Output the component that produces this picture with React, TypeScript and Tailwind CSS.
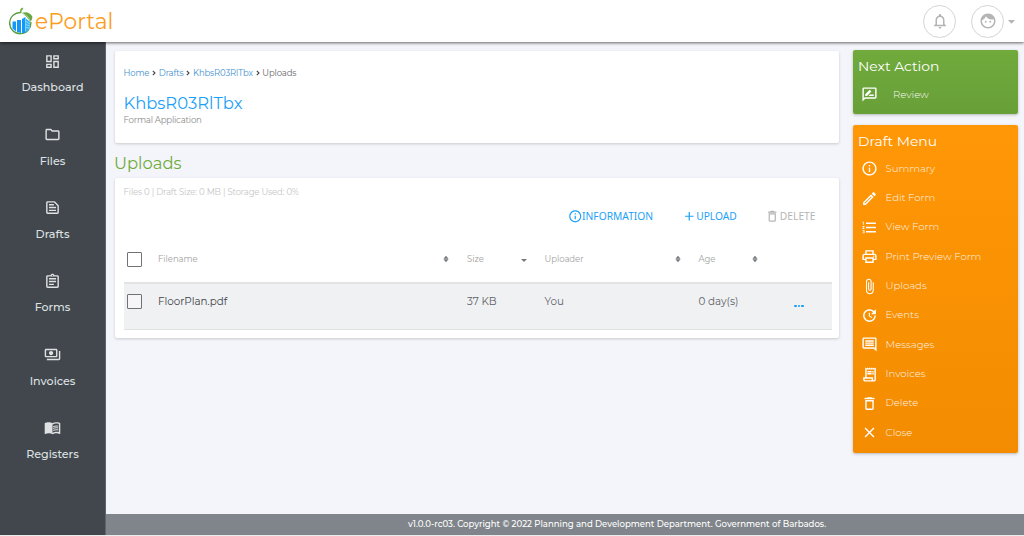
import type { ReactNode } from "react"
import type { IconType } from "react-icons"
import {
    MdAdd,
    MdArrowDropDown,
    MdAttachFile,
    MdClose,
    MdDeleteOutline,
    MdFace,
    MdFormatListNumbered,
    MdInfoOutline,
    MdMenuBook,
    MdNotificationsNone,
    MdOutlineAssignment,
    MdOutlineComment,
    MdOutlineDashboard,
    MdOutlineFolder,
    MdOutlineModeEdit,
    MdOutlinePayments,
    MdOutlinePrint,
    MdOutlineRateReview,
    MdOutlineReceiptLong,
    MdOutlineTextSnippet,
    MdUpdate,
} from "react-icons/md"

const navItems: { label: string; icon: IconType }[] = [
    { label: "Dashboard", icon: MdOutlineDashboard },
    { label: "Files", icon: MdOutlineFolder },
    { label: "Drafts", icon: MdOutlineTextSnippet },
    { label: "Forms", icon: MdOutlineAssignment },
    { label: "Invoices", icon: MdOutlinePayments },
    { label: "Registers", icon: MdMenuBook },
]

const draftMenu: { label: string; icon: IconType }[] = [
    { label: "Summary", icon: MdInfoOutline },
    { label: "Edit Form", icon: MdOutlineModeEdit },
    { label: "View Form", icon: MdFormatListNumbered },
    { label: "Print Preview Form", icon: MdOutlinePrint },
    { label: "Uploads", icon: MdAttachFile },
    { label: "Events", icon: MdUpdate },
    { label: "Messages", icon: MdOutlineComment },
    { label: "Invoices", icon: MdOutlineReceiptLong },
    { label: "Delete", icon: MdDeleteOutline },
    { label: "Close", icon: MdClose },
]

function Logo() {
    return (
        <svg viewBox="0 0 24 28" className="h-7 w-6 shrink-0">
            <path d="M12 5.5A10.6 10.6 0 1 0 21.8 15" fill="none" stroke="#5b9f43" strokeWidth="1.4" />
            <path d="M11.3 6C10.5 3.5 11.5 1.5 13.5.6L14.4 2C12.7 2.7 12.2 4 12.7 6Z" fill="#6fae45" />
            <path d="M13 6C17 4 21.5 5.8 23.3 9.5C23.6 12 22.5 14 20.8 15C19.5 11 16.5 8.5 13 6Z" fill="#67a843" />
            <path d="M14 6.5C17.5 8 20 10.5 21 14" fill="none" stroke="#d8edcb" strokeWidth=".6" />
            <path d="M3.5 14.5H7V24.5L3.5 21.5ZM8 13H12V26L8 25ZM13 12L16.5 10V25.7L13 26.2Z" fill="#1199fa" />
            <path d="M17 11.5L21 15V21.5L17 25.3Z" fill="#38b2f5" />
            <path d="M17 14.5L21 17M17 17.5L21 19.2M17 20.5L21 21.3" stroke="#c8ecff" strokeWidth=".6" />
        </svg>
    )
}

function Header() {
    return (
        <header className="relative z-10 flex h-[42px] shrink-0 items-center bg-white pl-[8.5px] pr-[6px] shadow-[0_1px_3px_rgba(0,0,0,0.6)]">
            <Logo />
            <span className="ml-[2.5px] pt-px text-[21.8px] leading-none text-[#fb9d21]">ePortal</span>
            <div className="ml-auto flex items-center">
                <div className="flex size-[33px] items-center justify-center rounded-full border border-[#d4d4d4]">
                    <MdNotificationsNone className="size-[18px] text-[#b4b4b4]" />
                </div>
                <div className="ml-[15px] flex size-[33px] items-center justify-center rounded-full border border-[#d4d4d4]">
                    <MdFace className="size-[18px] text-[#b4b4b4]" />
                </div>
                <MdArrowDropDown className="-ml-px -mr-[2px] size-[17px] text-[#b4b4b4]" />
            </div>
        </header>
    )
}

function Sidebar() {
    return (
        <aside className="w-[106px] shrink-0 border-r border-[#5f656b] bg-[#41474d] pt-[10.5px] text-[#dfe1e2]">
            {navItems.map(({ label, icon: Icon }) => (
                <a key={label} className="flex h-[73.35px] flex-col items-center">
                    <Icon className="size-[17px]" />
                    <span className="mt-[8.7px] text-[11.1px] font-medium leading-[18px]">{label}</span>
                </a>
            ))}
        </aside>
    )
}

function Card({ className, children }: { className: string; children: ReactNode }) {
    return (
        <div className={`rounded-[2px] bg-white px-[8.5px] shadow-[0_1px_3px_rgba(0,0,0,0.18)] ${className}`}>{children}</div>
    )
}

function Sort({ down = false }: { down?: boolean }) {
    return (
        <svg viewBox="0 0 6 8" className="h-[8px] w-[6px] text-[#75797d]" fill="currentColor">
            {down ? <path d="M0 4h6L3 7z" /> : <path d="M.4 3.7 3 .8l2.6 2.9zM.4 4.3h5.2L3 7.2z" />}
        </svg>
    )
}

function Checkbox() {
    return <div className="ml-[3.5px] size-[15px] rounded-[1px] border-[1.5px] border-[#707276] bg-white/40" />
}

function Crumb() {
    return (
        <svg viewBox="0 0 4 6" className="mx-[2.75px] h-[6px] w-[4px]" fill="none" stroke="#444" strokeWidth="1.1">
            <path d="M.8.8 3 3 .8 5.2" />
        </svg>
    )
}

function Breadcrumbs() {
    return (
        <nav className="flex items-center text-[8.5px] leading-[12px] tracking-[-0.15px] text-[#4590d0]">
            <a>Home</a>
            <Crumb />
            <a>Drafts</a>
            <Crumb />
            <a>KhbsR03RlTbx</a>
            <Crumb />
            <span className="text-[#66696c]">Uploads</span>
        </nav>
    )
}

function FilesTable() {
    const cols = "grid grid-cols-[34.5px_309px_77.5px_154px_95.5px_1fr]"
    return (
        <div className="mt-[14px] -mr-px">
            <div className={`${cols} h-[45.5px] items-center border-b-2 border-[#e2e4e4] text-[8.5px] tracking-[-0.05px] text-[#a2a2a2]`}>
                <Checkbox />
                <div className="flex items-center justify-between pb-px pr-[18.5px]">
                    <span>Filename</span>
                    <Sort />
                </div>
                <div className="flex items-center justify-between pb-px pr-[18px]">
                    <span>Size</span>
                    <Sort down />
                </div>
                <div className="flex items-center justify-between pb-px pr-[17.5px]">
                    <span>Uploader</span>
                    <Sort />
                </div>
                <div className="flex items-center justify-between pb-px pr-[36px]">
                    <span>Age</span>
                    <Sort />
                </div>
            </div>
            <div className={`${cols} h-[46.5px] border-b border-[#dfe1e1] bg-[#f0f1f3] pt-[10px] text-[10.35px] leading-[16px] text-[#5d6267]`}>
                <Checkbox />
                <span className="text-[#3e4449]">FloorPlan.pdf</span>
                <span>37 KB</span>
                <span>You</span>
                <span>0 day(s)</span>
                <div className="mt-[11px] flex items-start gap-[1px]">
                    <i className="size-[2.5px] rounded-full bg-[#129df5]" />
                    <i className="size-[2.5px] rounded-full bg-[#129df5]" />
                    <i className="size-[2.5px] rounded-full bg-[#129df5]" />
                </div>
            </div>
        </div>
    )
}

export default function App() {
    return (
        <div className="flex h-[536px] w-[1024px] flex-col overflow-hidden border-b border-[#e9ebed] bg-[#f4f5fa] font-['Montserrat','Inter',sans-serif]">
            <Header />
            <div className="flex min-h-0 flex-1">
                <Sidebar />
                <div className="flex min-w-0 flex-1 flex-col">
                    <div className="flex flex-1 pl-[9px] pr-[6px]">
                        <main className="w-[724px] pt-[9px]">
                            <Card className="h-[92px] pt-[16px]">
                                <Breadcrumbs />
                                <h1 className="mt-[13px] text-[16.4px] leading-[22px] text-[#1ba1f7]">KhbsR03RlTbx</h1>
                                <p className="text-[8.6px] leading-[12px] tracking-[-0.22px] text-[#8c8c8c]">Formal Application</p>
                            </Card>
                            <h2 className="-ml-px mt-[9px] text-[16.4px] leading-[22px] text-[#70ab3b]">Uploads</h2>
                            <Card className="mt-[4px] h-[160px] pt-[8px]">
                                <p className="text-[8.5px] leading-[12px] tracking-[-0.14px] text-[#c6c6c6]">
                                    Files 0 | Draft Size: 0 MB | Storage Used: 0%
                                </p>
                                <div className="mt-[10px] flex items-center justify-end pr-[15px] font-['Noto_Sans'] text-[10.25px] leading-[16px] text-[#1ba1f7]">
                                    <a className="flex items-center">
                                        <MdInfoOutline className="size-[14.5px]" />
                                        INFORMATION
                                    </a>
                                    <a className="ml-[28.5px] flex items-center">
                                        <MdAdd className="size-[14.5px]" />
                                        UPLOAD
                                    </a>
                                    <a className="ml-[28.5px] flex items-center text-[#b5b5b5]">
                                        <MdDeleteOutline className="size-[14.5px]" />
                                        DELETE
                                    </a>
                                </div>
                                <FilesTable />
                            </Card>
                        </main>
                        <aside className="ml-[14px] w-[165px] pt-[7.5px] text-white">
                            <section className="h-[64px] rounded-[2px] bg-linear-to-b from-[#70aa3c] to-[#68a038] px-[5px] pt-[6.5px] shadow-[0_1px_3px_rgba(0,0,0,0.25)]">
                                <h3 className="text-[13.9px] leading-[20px]">Next Action</h3>
                                <a className="mt-[9.5px] flex items-center pl-[3px] text-[10.1px] font-light leading-[18px]">
                                    <MdOutlineRateReview className="mr-[15px] size-[17px]" />
                                    <span className="opacity-95">Review</span>
                                </a>
                            </section>
                            <section className="mt-[11px] h-[328px] rounded-[2px] bg-linear-to-b from-[#ff9707] to-[#f38c00] px-[5px] pt-[6.5px] shadow-[0_1px_3px_rgba(0,0,0,0.25)]">
                                <h3 className="text-[13.9px] leading-[20px]">Draft Menu</h3>
                                <div className="mt-[2.5px]">
                                    {draftMenu.map(({ label, icon: Icon }) => (
                                        <a key={label} className="flex h-[29.35px] items-center pl-[3px] text-[10.1px] font-light">
                                            <Icon className="mr-[7.5px] mt-[1px] size-[17px]" />
                                            <span className="opacity-90">{label}</span>
                                        </a>
                                    ))}
                                </div>
                            </section>
                        </aside>
                    </div>
                    <footer className="flex h-[21px] shrink-0 items-center justify-center bg-[#7f858a] pl-[104px] text-[8.55px] font-medium text-white">
                        <span className="whitespace-nowrap">
                            v1.0.0-rc03. Copyright © 2022 Planning and Development Department. Government of Barbados.
                        </span>
                    </footer>
                </div>
            </div>
        </div>
    )
}
